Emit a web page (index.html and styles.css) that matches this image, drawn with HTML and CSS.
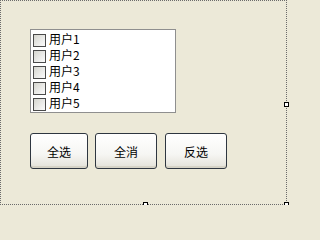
FILE: index.html
```html
<!DOCTYPE html>
<html>
<head>
<meta charset="utf-8">
<link rel="stylesheet" href="styles.css">
</head>
<body>
<div class="form">
  <div class="listbox">
    <div class="item"><span class="check"></span><span class="label">用户1</span></div>
    <div class="item"><span class="check"></span><span class="label">用户2</span></div>
    <div class="item"><span class="check"></span><span class="label">用户3</span></div>
    <div class="item"><span class="check"></span><span class="label">用户4</span></div>
    <div class="item"><span class="check"></span><span class="label">用户5</span></div>
  </div>
  <div class="buttons">
    <button class="btn btn-first">全选</button>
    <button class="btn btn-second">全消</button>
    <button class="btn btn-third">反选</button>
  </div>
  <span class="handle handle-right"></span>
  <span class="handle handle-bottom"></span>
  <span class="handle handle-corner"></span>
</div>
</body>
</html>
```
FILE: styles.css
```css
html, body {
  margin: 0;
  padding: 0;
  background: #ece9d8;
}
.form {
  position: relative;
  box-sizing: border-box;
  width: 287px;
  height: 205px;
  border: 1px dotted #6b6b6b;
  padding: 28px 0 0 29px;
  font-family: "Noto Sans CJK SC", "Liberation Sans", sans-serif;
  font-size: 12px;
  color: #000;
}
.listbox {
  box-sizing: border-box;
  width: 146px;
  height: 84px;
  background: #fff;
  border: 1px solid #8f8f8f;
  padding: 2px 0 0 2px;
}
.item {
  display: flex;
  align-items: center;
  height: 16px;
}
.check {
  box-sizing: border-box;
  width: 13px;
  height: 13px;
  border: 1px solid #4a4a4a;
  background: linear-gradient(135deg, #d6d6cf 0%, #ececea 60%, #fbfbfb 100%);
  margin-right: 3px;
}
.label {
  line-height: 14px;
  margin-top: -2px;
}
.buttons {
  display: flex;
  margin-top: 20px;
}
.btn {
  box-sizing: border-box;
  height: 36px;
  border: 1px solid #2e3640;
  border-radius: 3px;
  background: linear-gradient(#ffffff 0%, #f6f6f3 60%, #e3e1d8 100%);
  box-shadow: inset 0 -2px 0 #d6d3c6;
  font-family: "Noto Sans CJK SC", "Liberation Sans", sans-serif;
  font-size: 12px;
  color: #000;
  padding: 0;
}
.btn-first { width: 58px; margin-right: 7px; }
.btn-second { width: 62px; margin-right: 8px; }
.btn-third { width: 62px; }
.handle {
  position: absolute;
  box-sizing: border-box;
  width: 5px;
  height: 5px;
  background: #fff;
  border: 1px solid #000;
}
.handle-right { left: 283px; top: 101px; }
.handle-bottom { left: 142px; top: 201px; }
.handle-corner { left: 283px; top: 201px; }
```
